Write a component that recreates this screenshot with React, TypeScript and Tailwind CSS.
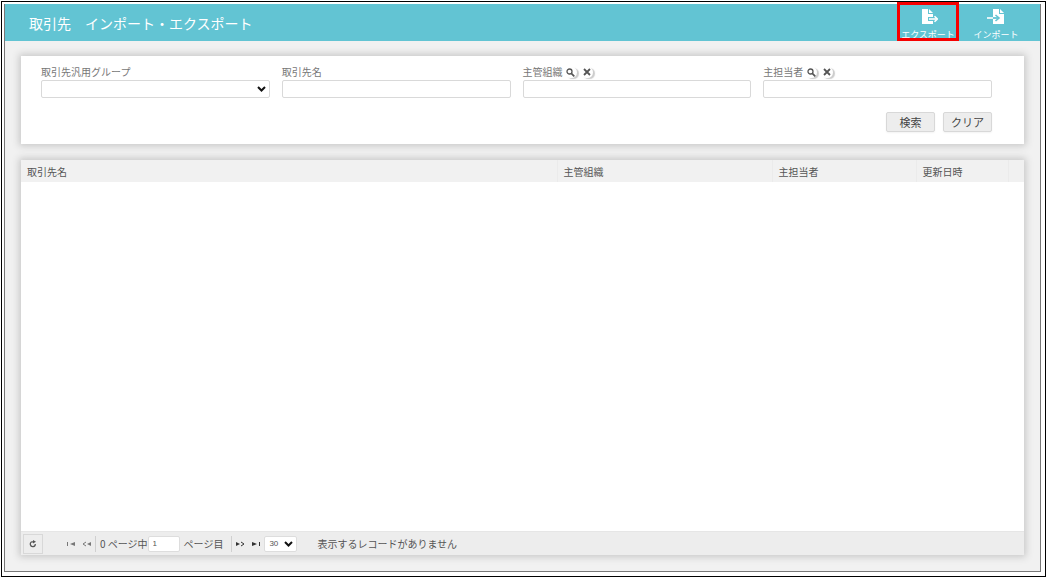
import type { ReactNode } from "react"

const columns = [
  { label: "取引先名", width: "" },
  { label: "主管組織", width: "w-[215px]" },
  { label: "主担当者", width: "w-[144px]" },
  { label: "更新日時", width: "w-[92px]" },
]

const inputClass = "block h-[18px] w-full rounded-xs border border-[#d9d9d9] bg-white px-1 text-[10px] outline-none"

function ExportIcon() {
  return (
    <svg width="20" height="16" viewBox="0 0 20 16" fill="none">
      <path d="M4 0h6v5h5v10H4z" fill="#fff" />
      <path d="M11 0l4 4h-4z" fill="#fff" />
      <path d="M10 10h6" stroke="#62c4d3" strokeWidth="4" />
      <path d="M11 10h7" stroke="#fff" strokeWidth="1.600" />
      <path d="M16.500 7.200L19.300 10l-2.800 2.800" stroke="#fff" strokeWidth="1.600" />
    </svg>
  )
}

function ImportIcon() {
  return (
    <svg width="20" height="16" viewBox="0 0 20 16" fill="none">
      <path d="M7 0h6v5h5v10H7z" fill="#fff" />
      <path d="M14 0l4 4h-4z" fill="#fff" />
      <path d="M1 9h6" stroke="#fff" strokeWidth="1.600" />
      <path d="M7 9h5" stroke="#62c4d3" strokeWidth="1.800" />
      <path d="M9.500 6l3.500 3-3.500 3" stroke="#62c4d3" strokeWidth="1.600" />
    </svg>
  )
}

function IconButton({ label, children }: { label: string; children: ReactNode }) {
  return (
    <button
      type="button"
      aria-label={label}
      className="flex h-[11px] w-3 items-center justify-center rounded-full text-[#555] shadow-[2px_1px_1px_#ccc]"
    >
      {children}
    </button>
  )
}

function LookupButtons({ name }: { name: string }) {
  return (
    <div className="flex gap-1">
      <IconButton label={`${name}を検索`}>
        <svg width="9" height="9" viewBox="0 0 9 9" fill="none" stroke="currentColor">
          <circle cx="3.500" cy="3.500" r="2.500" strokeWidth="1.300" />
          <path d="M5.300 5.300l3 3" strokeWidth="1.700" />
        </svg>
      </IconButton>
      <IconButton label={`${name}をクリア`}>
        <svg width="8" height="8" viewBox="0 0 8 8" stroke="currentColor" strokeWidth="1.800">
          <path d="M1 1l6 6M7 1L1 7" />
        </svg>
      </IconButton>
    </div>
  )
}

function Field({ id, label, lookup, children }: { id: string; label: string; lookup?: boolean; children: ReactNode }) {
  return (
    <div>
      <div className="flex h-4 items-center gap-0.5 leading-4">
        <label htmlFor={id} className="text-[#777]">{label}</label>
        {lookup && <LookupButtons name={label} />}
      </div>
      {children}
    </div>
  )
}

function Chevron() {
  return (
    <svg
      width="9"
      height="6"
      viewBox="0 0 9 6"
      fill="none"
      stroke="#111"
      strokeWidth="2"
      className="pointer-events-none absolute top-1/2 right-1 -translate-y-1/2"
    >
      <path d="M1 1l3.500 3.500L8 1" />
    </svg>
  )
}

function PageButton({ label, children }: { label: string; children: ReactNode }) {
  return (
    <button type="button" aria-label={label} className="flex h-4 w-4 items-center justify-center">
      <svg width="10" height="6" viewBox="0 0 10 6">
        {children}
      </svg>
    </button>
  )
}

export default function App() {
  return (
    <div
      lang="ja"
      className="flex min-h-screen flex-col bg-white pt-px pl-px font-['Noto_Sans_CJK_JP',sans-serif] text-[10px] text-[#555]"
    >
      <div className="flex flex-1 flex-col border border-black pt-0.5 pr-1 pb-1 pl-0.5">
        <div className="flex flex-1 flex-col border-x border-b border-[#777] bg-[#f1f1f1]">
          <header className="flex h-[37px] items-center justify-between bg-[#62c4d3] pr-2.5 pl-6 text-white">
            <h1 className="text-[14px] leading-5">取引先　インポート・エクスポート</h1>
            <div className="flex h-full text-[9px] leading-3">
              <button type="button" className="relative flex w-[68px] flex-col items-center justify-end gap-1">
                <ExportIcon />
                エクスポート
                <span className="absolute inset-x-[3px] -top-0.5 bottom-0 border-3 border-[#f60000]" />
              </button>
              <button type="button" className="flex w-[68px] flex-col items-center justify-end gap-1">
                <ImportIcon />
                インポート
              </button>
            </div>
          </header>

          <main className="flex flex-1 flex-col gap-4 p-4 pt-[15px]">
            <form className="bg-white px-5 pt-2 pb-3 shadow-[0_0_7px_2px_#c8c8c8]" onSubmit={(e) => e.preventDefault()}>
              <div className="grid grid-cols-4 gap-3 pr-3">
                <Field id="group" label="取引先汎用グループ">
                  <div className="relative">
                    <select id="group" className={`${inputClass} appearance-none`} />
                    <Chevron />
                  </div>
                </Field>
                <Field id="name" label="取引先名">
                  <input id="name" className={inputClass} />
                </Field>
                <Field id="org" label="主管組織" lookup>
                  <input id="org" className={inputClass} />
                </Field>
                <Field id="owner" label="主担当者" lookup>
                  <input id="owner" className={inputClass} />
                </Field>
              </div>
              <div className="mt-[14px] flex justify-end gap-2 pr-3 text-[11px] leading-[18px] text-[#444]">
                <button type="submit" className="w-[49px] rounded-xs border border-[#d8d8d8] bg-[#ededed] shadow-xs">
                  検索
                </button>
                <button type="reset" className="w-[49px] rounded-xs border border-[#d8d8d8] bg-[#ededed] shadow-xs">
                  クリア
                </button>
              </div>
            </form>

            <section className="flex flex-1 flex-col bg-white shadow-[0_0_7px_2px_#c8c8c8]">
              <table className="w-full table-fixed">
                <thead>
                  <tr className="h-[22px] bg-[#f1f1f1] text-left">
                    {columns.map((c) => (
                      <th key={c.label} className={`${c.width} border-r border-[#ebebeb] px-1.5 font-normal`}>
                        {c.label}
                      </th>
                    ))}
                    <td className="w-4" />
                  </tr>
                </thead>
              </table>

              <footer className="mt-auto flex h-6 items-center border-t border-[#e6e6e6] bg-[#ededed] pl-0.5">
                <button
                  type="button"
                  aria-label="更新"
                  className="mr-5 flex h-5 w-5 items-center justify-center border border-[#d8d8d8]"
                >
                  <svg width="8" height="8" viewBox="0 0 8 8" fill="none" stroke="#555" strokeWidth="1.200">
                    <path d="M4.500 1.800H3A2.500 2.500 0 1 0 6.300 4" />
                    <path d="M4 0l3 1.800-3 1.700z" fill="#555" stroke="none" />
                  </svg>
                </button>
                <PageButton label="最初のページ">
                  <path d="M1 1h1v4H1zM9 1v4L4 3z" fill="#777" />
                </PageButton>
                <PageButton label="前のページ">
                  <path d="M9 1v4L5 3z" fill="#777" />
                  <path d="M4 1L1 3l3 2" fill="none" stroke="#777" />
                </PageButton>
                <label htmlFor="page" className="border-l border-[#d0d0d0] pl-1 leading-4">
                  0 ページ中
                </label>
                <input
                  id="page"
                  defaultValue="1"
                  className="mr-1 h-4 w-8 rounded-xs border border-[#ddd] bg-white px-1 font-['Liberation_Sans',sans-serif] text-[8px] outline-none"
                />
                <span className="border-r border-[#d0d0d0] pr-2 leading-4">ページ目</span>
                <PageButton label="次のページ">
                  <path d="M1 1v4l4-2z" fill="#333" />
                  <path d="M6 1l3 2-3 2" fill="none" stroke="#333" />
                </PageButton>
                <PageButton label="最後のページ">
                  <path d="M1 1v4l5-2zM8 1h1v4H8z" fill="#333" />
                </PageButton>
                <div className="relative w-[33px]">
                  <select
                    aria-label="表示件数"
                    className="block h-4 w-full appearance-none rounded-xs border border-[#ddd] bg-white pl-1 font-['Liberation_Sans',sans-serif] text-[8px] outline-none"
                  >
                    <option>30</option>
                  </select>
                  <Chevron />
                </div>
                <p className="ml-5">表示するレコードがありません</p>
              </footer>
            </section>
          </main>
        </div>
      </div>
    </div>
  )
}
